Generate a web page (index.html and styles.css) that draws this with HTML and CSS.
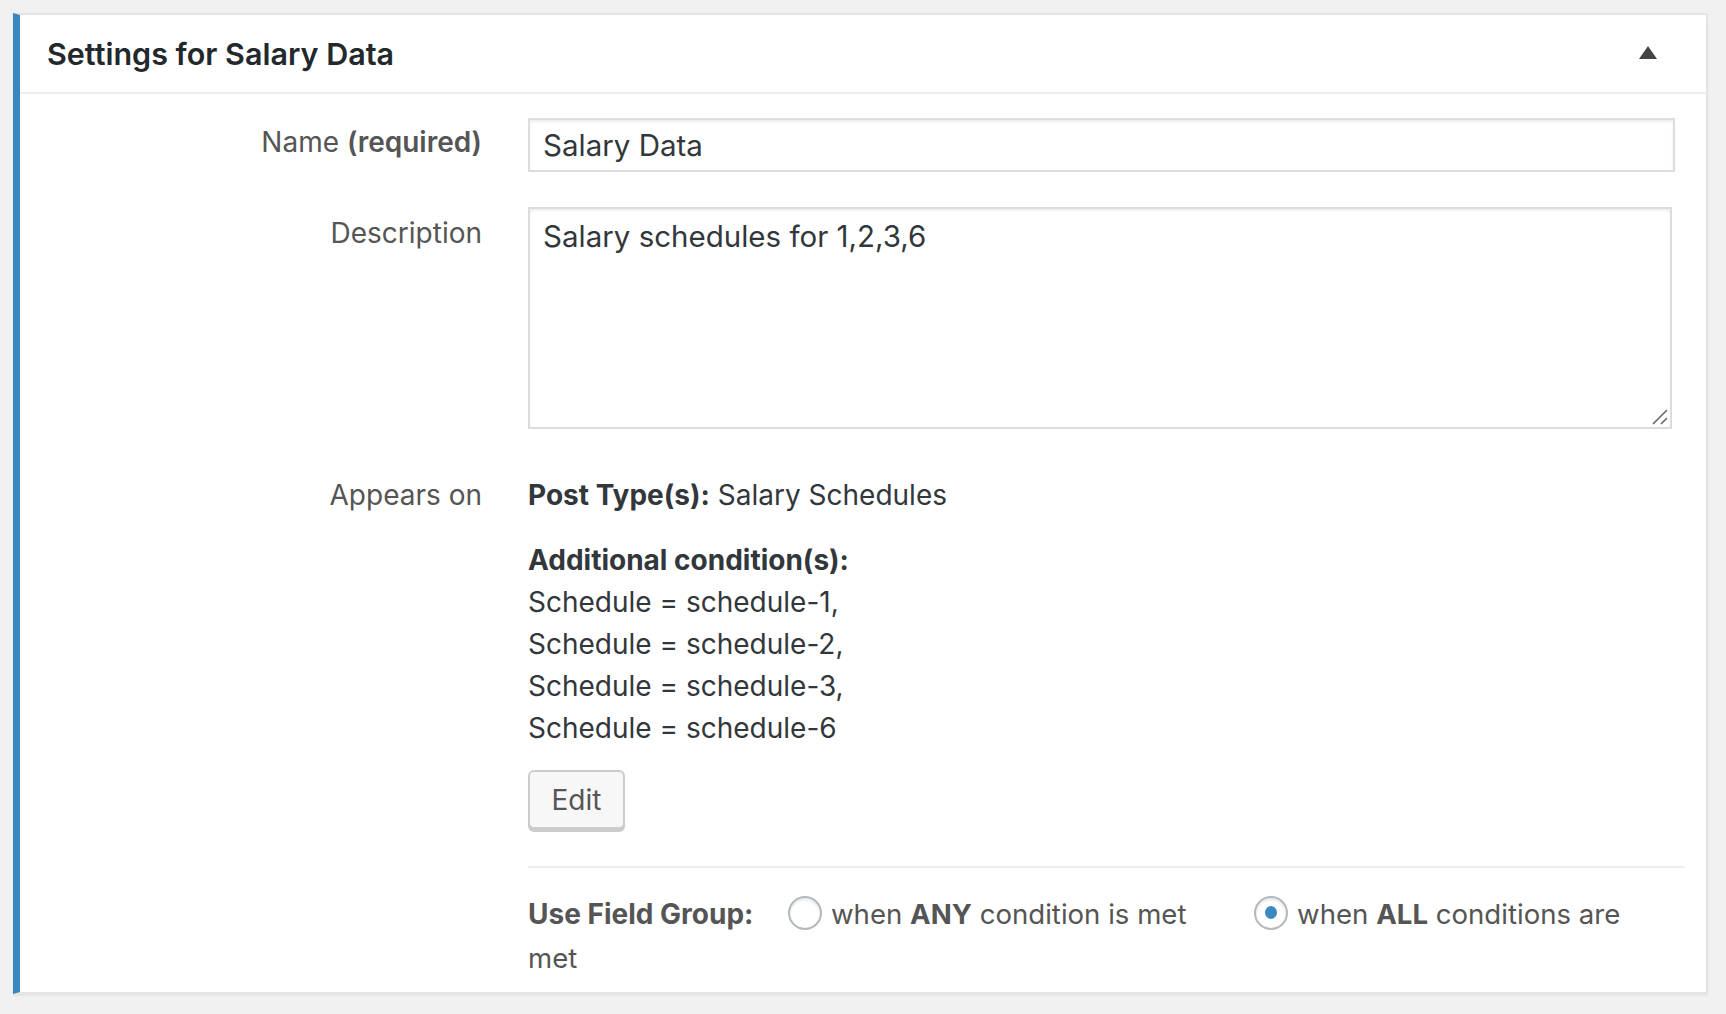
FILE: index.html
```html
<!DOCTYPE html>
<html lang="en">
<head>
    <meta charset="UTF-8">
    <meta name="viewport" content="width=device-width, initial-scale=1.0">
    <title>Settings for Salary Data</title>
    <link rel="stylesheet" href="styles.css">
</head>
<body>
    <div class="postbox">
        <div class="postbox-header">
            <h2>Settings for Salary Data</h2>
            <button class="toggle" type="button" aria-label="Toggle panel"></button>
        </div>

        <div class="settings">
            <label class="field-label name-label" for="groupName">Name <b>(required)</b></label>
            <div class="field">
                <input type="text" id="groupName" class="text-input" value="Salary Data">
            </div>

            <label class="field-label" for="groupDesc">Description</label>
            <div class="field">
                <textarea id="groupDesc" class="text-area">Salary schedules for 1,2,3,6</textarea>
            </div>

            <div class="field-label appears-label">Appears on</div>
            <div class="field appears">
                <p class="post-types"><b>Post Type(s):</b> Salary Schedules</p>
                <p class="conditions">
                    <b>Additional condition(s):</b><br>
                    Schedule = schedule-1,<br>
                    Schedule = schedule-2,<br>
                    Schedule = schedule-3,<br>
                    Schedule = schedule-6
                </p>
                <button class="edit-btn" type="button">Edit</button>

                <div class="use-group">
                    <b class="use-label">Use Field Group:</b>
                    <label class="radio"><input type="radio" name="match" value="any"> when <b>ANY</b> condition is met</label>
                    <label class="radio"><input type="radio" name="match" value="all" checked> when <b>ALL</b> conditions are met</label>
                </div>
            </div>
        </div>
    </div>
</body>
</html>
```

FILE: styles.css
```css
body {
    margin: 0;
    padding: 13px 18px 20px 13px;
    background-color: #f1f1f1;
    font-family: Inter, "Noto Sans", sans-serif;
    font-size: 28px;
    line-height: 42px;
    color: #32373c;
}
.postbox {
    background-color: #fff;
    border: 2px solid #e5e5e5;
    border-left: 7px solid #3a87bb; /* highlighted group */
    box-shadow: 0 2px 2px rgba(0, 0, 0, 0.05);
}
.postbox-header {
    display: flex;
    align-items: center;
    justify-content: space-between;
    height: 77px;
    padding: 0 49px 0 27px;
    border-bottom: 2px solid #eee;
}
.postbox-header h2 {
    margin: 0;
    font-size: 30.5px;
    font-weight: 600;
    color: #23282d;
}
.toggle {
    width: 18px;
    height: 13px;
    padding: 0;
    border: none;
    background: none;
    border-left: 9px solid transparent;
    border-right: 9px solid transparent;
    border-bottom: 13px solid #444;
    cursor: pointer;
    margin-top: -2px;
}
.settings {
    display: grid;
    grid-template-columns: 462px 1fr;
    column-gap: 46px;
    row-gap: 35px;
    padding: 24px 21px 12px 0;
}
.field-label {
    text-align: right;
    padding-top: 5px;
    color: #555;
}
.field-label.name-label {
    padding-top: 3px;
}
.field-label b {
    font-weight: 600;
}
.text-input, .text-area {
    display: block;
    box-sizing: border-box;
    border: 2px solid #ddd;
    box-shadow: inset 0 2px 3px rgba(0, 0, 0, 0.07);
    background-color: #fff;
    font-family: inherit;
    font-size: 29.5px;
    color: #32373c;
    outline: none;
    margin: 0;
}
.text-input {
    width: calc(100% - 10px);
    height: 54px;
    padding: 0 13px;
}
.text-area {
    width: calc(100% - 13px);
    height: 222px;
    padding: 7px 13px;
    line-height: 1.4;
    resize: none;
    /* drag handle in the corner */
    background-image: url("data:image/svg+xml;utf8,<svg xmlns='http://www.w3.org/2000/svg' width='16' height='16'><path d='M1 15 L15 1 M9 15 L15 9' stroke='%23666' stroke-width='1.6'/></svg>");
    background-repeat: no-repeat;
    background-position: right 2px bottom 2px;
}
.appears, .field-label.appears-label {
    padding-top: 10px;
}
.appears p {
    margin: 0;
}
.appears b {
    font-weight: 700;
}
.post-types {
    margin-bottom: 23px !important;
}
.edit-btn {
    display: block;
    margin-top: 21px;
    width: 97px;
    height: 59px;
    border: 2px solid #ccc;
    border-radius: 6px;
    background-color: #f7f7f7;
    box-shadow: 0 3px 0 #ccc;
    font-family: inherit;
    font-size: 28px;
    color: #555;
    cursor: pointer;
}
.use-group {
    margin-top: 37px;
    border-top: 2px solid #eee;
    padding-top: 24px;
    line-height: 44px;
    color: #555;
    padding-right: 40px;
}
.use-label {
    margin-right: 27px;
    color: #555;
}
.radio {
    margin-right: 60px;
    white-space: nowrap;
    font-size: 27.6px;
}
.radio b {
    color: #555;
}
.radio:last-child {
    white-space: normal;
    margin-right: 0;
}
.radio input {
    appearance: none;
    -webkit-appearance: none;
    box-sizing: border-box;
    width: 34px;
    height: 34px;
    margin: 0 1px 0 0;
    border: 2px solid #b4b9be;
    border-radius: 50%;
    background-color: #fff;
    box-shadow: inset 0 2px 3px rgba(0, 0, 0, 0.1);
    vertical-align: -6px;
    position: relative;
}
.radio input:checked::before {
    content: "";
    position: absolute;
    left: 9px;
    top: 8px;
    width: 12px;
    height: 13px;
    border-radius: 50%;
    background-color: #3c88c0;
}
```
